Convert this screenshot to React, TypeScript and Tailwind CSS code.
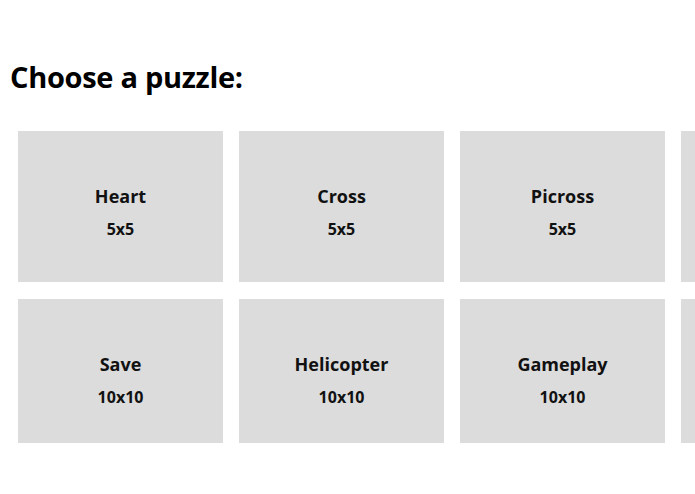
import React from "react";

type Puzzle = { name: string; size: string };

const rows: { height: string; items: Puzzle[] }[] = [
  {
    height: "h-[151px]",
    items: [
      { name: "Heart", size: "5x5" },
      { name: "Cross", size: "5x5" },
      { name: "Picross", size: "5x5" },
    ],
  },
  {
    height: "h-[144px]",
    items: [
      { name: "Save", size: "10x10" },
      { name: "Helicopter", size: "10x10" },
      { name: "Gameplay", size: "10x10" },
    ],
  },
];

function PuzzleCard({ puzzle, height }: { puzzle: Puzzle; height: string }) {
  return (
    <div
      className={`${height} w-[205px] shrink-0 bg-[#dcdcdc] flex flex-col items-center pt-[53px] text-[#111]`}
    >
      <div className="text-[18px] font-bold leading-[24px]">{puzzle.name}</div>
      <div className="text-[16px] font-bold leading-[20px] mt-[11px]">{puzzle.size}</div>
    </div>
  );
}

export default function App() {
  return (
    <div
      className="w-[695px] h-[494px] overflow-hidden bg-white"
      style={{ fontFamily: '"Open Sans", "Liberation Sans", sans-serif' }}
    >
      <h1 className="ml-[10px] mt-[57px] text-[29px] font-bold leading-[40px] text-black tracking-[-0.3px]">
        Choose a puzzle:
      </h1>
      <div className="ml-[18px] mt-[34px] flex flex-col gap-[17px]">
        {rows.map((row, i) => (
          <div key={i} className="flex gap-[16px]">
            {row.items.map((p) => (
              <PuzzleCard key={p.name} puzzle={p} height={row.height} />
            ))}
            <div className={`${row.height} w-[205px] shrink-0 bg-[#dcdcdc]`} />
          </div>
        ))}
      </div>
    </div>
  );
}
